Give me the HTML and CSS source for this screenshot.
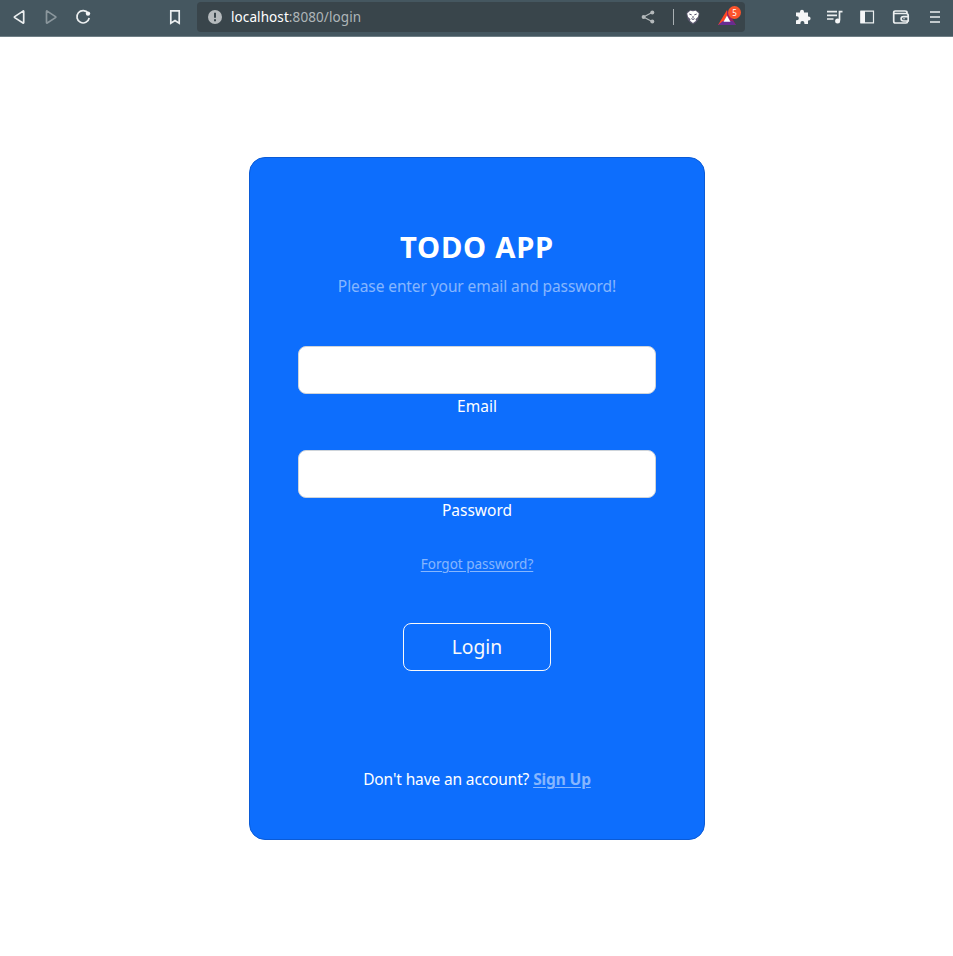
FILE: index.html
```html
<!DOCTYPE html>
<html lang="en">
<head>
<meta charset="utf-8">
<title>Todo App</title>
<link rel="stylesheet" href="styles.css">
</head>
<body>
<header class="toolbar">
  <div class="nav">
    <svg class="icon" viewBox="0 0 20 20"><path d="M14.700 4.500v11q0 .8-.7.4L5.700 10.600q-.7-.5 0-1L14 4.100q.7-.4.7.4Z"/></svg>
    <svg class="icon dim" viewBox="0 0 20 20"><path d="M5.500 4.500v11q0 .8.7.4l8.300-5.300q.7-.5 0-1L6.200 4.100Q5.500 3.700 5.500 4.500Z"/></svg>
    <svg class="icon" viewBox="0 0 20 20"><path d="M15.200 6.200A6.200 6.200 0 1 0 16.200 11"/><circle class="solid" cx="15" cy="6.600" r="2.200"/></svg>
  </div>
  <svg class="icon bookmark" viewBox="0 0 20 20"><path d="M5.800 3.800h8.400v12.400L10 13.600l-4.200 2.600Z"/></svg>
  <div class="address">
    <svg class="info" viewBox="0 0 14 14"><circle cx="7" cy="7" r="7"/><path d="M7 2.800v5M7 9.200v2"/></svg>
    <span class="url"><b class="host">localhost</b>:8080/login</span>
    <svg class="share" viewBox="0 0 14 14"><path d="M11.500 2.200 2.500 7l9 4.800"/><circle cx="11.300" cy="2.400" r="2"/><circle cx="2.600" cy="7" r="2"/><circle cx="11.300" cy="11.600" r="2"/></svg>
    <span class="divider"></span>
    <svg class="lion" viewBox="0 0 14 16"><path class="mane" d="M4 1h6l1.300 1.200 1.500.2.800 2.400-1.400 6-2.400 2.700L7 15.500l-2.800-2L1.800 10.800.4 4.800l.8-2.400 1.500-.2Z"/><path class="face" d="m4.200 1.800 2.800.5 2.800-.5 3 2.800-.9 3.400-2.400 2.300.5 1.500L7 14l-3-2.200.5-1.500L2.100 8l-.9-3.400Z"/><path class="features" d="m3.300 5 2.400.9M10.700 5l-2.400.9M7 7v2.200M5.300 9.600 7 10.500l1.700-.9"/></svg>
    <div class="rewards">
      <svg viewBox="0 0 18 16"><path fill="#ff4724" d="M9 0v6L4 15H0Z"/><path fill="#9e1f63" d="M9 0v6l5 9h4Z"/><path fill="#662d91" d="M0 15h18l-3.500-4H5Z"/><path fill="#fff" d="m9 5.500 3.500 6.200h-7Z"/></svg>
      <span class="count">5</span>
    </div>
  </div>
  <div class="tools">
    <svg class="icon" viewBox="0 0 20 20"><path class="solid" d="M3 5.500h4V4.700a2 2 0 0 1 4 0v.8h4v4h.6a2 2 0 0 1 0 4H15V17h-3.600v-1a2 2 0 0 0-4 0v1H3v-3.700h.8a2 2 0 0 0 0-4H3Z"/></svg>
    <svg class="icon" viewBox="0 0 20 20"><path d="M2 4.600h10M2 8.300h10M2 12h6.500M17.500 4.600h-3v9"/><circle class="solid" cx="12.600" cy="14" r="2.500"/></svg>
    <svg class="icon" viewBox="0 0 20 20"><path class="thin" d="M3.900 4.200h12.600v11.600H3.900Z"/><path class="solid" d="M3.500 4H8v12H3.500Z"/></svg>
    <svg class="icon wallet" viewBox="0 0 20 20"><path d="M16 7V5.500Q16 4 14 4H4.200Q2.700 4 2.700 5.500v8.700Q2.700 16 4.500 16H15q1.500 0 1.500-1.500V14M3 6.500h12q2.200 0 2.200 2V14H12.500q-2.400 0-2.400-2.200t2.400-2.200h4.700"/><circle class="solid" cx="13" cy="11.800" r=".7"/></svg>
    <svg class="icon menu" viewBox="0 0 20 20"><path d="M5 5h10M5 10h10M5 15h10"/></svg>
  </div>
</header>
<main class="page">
  <form class="card">
    <h2 class="title">TODO APP</h2>
    <p class="subtitle">Please enter your email and password!</p>
    <div class="field">
      <input class="input" type="email" id="email">
      <label for="email">Email</label>
    </div>
    <div class="field">
      <input class="input" type="password" id="password">
      <label for="password">Password</label>
    </div>
    <p class="forgot"><a href="#">Forgot password?</a></p>
    <button class="login" type="button">Login</button>
    <p class="signup">Don't have an account? <a href="#">Sign Up</a></p>
  </form>
</main>
</body>
</html>
```
FILE: styles.css
```css
* { box-sizing: border-box; }
body {
  margin: 0;
  min-height: 956px;
  background: #fff;
  font: 15.5px/24px "Noto Sans", sans-serif;
}
.toolbar {
  display: flex;
  align-items: flex-start;
  height: 37px;
  padding: 2px 8px 0 9px;
  background: #455760;
  border-bottom: 1px solid #6f7f86;
}
.icon {
  width: 20px;
  height: 20px;
  flex: none;
  fill: none;
  stroke: #eceff0;
  stroke-width: 1.7;
}
.solid { fill: #f5f6f7; stroke: none; }
.thin { stroke-width: 1.2; }
.dim { stroke: #8b979d; }
.nav { display: flex; gap: 12px; padding-top: 5px; }
.bookmark { margin: 5px 12px 0 72px; }
.address {
  display: flex;
  align-items: center;
  width: 548px;
  height: 30px;
  padding: 0 4px 0 11px;
  border-radius: 4px;
  background: #39454b;
}
.info { width: 14px; height: 14px; margin-right: 9px; fill: #b5babd; }
.info path { stroke: #39454b; stroke-width: 2; }
.url { color: #aeb5b8; font-size: 13.5px; letter-spacing: .09px; }
.host { color: #fff; font-weight: 400; }
.share { width: 14px; height: 14px; margin-left: auto; fill: #b4b9bb; stroke: #b4b9bb; stroke-width: 1.2; }
.share path { fill: none; }
.share circle { stroke: none; }
.divider { width: 1px; height: 16px; margin: 0 12px 0 18px; background: #a9b0b3; }
.lion { width: 14px; height: 16px; }
.mane { fill: #5d5a70; }
.face { fill: #fff; }
.features { fill: none; stroke: #54506a; stroke-width: 1; }
.rewards { position: relative; width: 23px; height: 22px; margin-left: 18px; }
.rewards svg { width: 18px; height: 16px; margin-top: 4px; display: block; }
.count {
  position: absolute;
  top: 0;
  right: 0;
  width: 13px;
  height: 13px;
  border-radius: 50%;
  background: #fb542b;
  color: #fff;
  font-size: 8px;
  line-height: 13px;
  text-align: center;
}
.tools { display: flex; gap: 12px; margin-left: auto; padding-top: 5px; }
.wallet, .menu { margin-left: 2px; }
.page { display: flex; justify-content: center; padding: 120px 0 0 1px; }
.card {
  display: flex;
  flex-direction: column;
  width: 456px;
  height: 683px;
  padding: 71px 48px 48px;
  border: 1px solid #0b5bd6;
  border-radius: 16px;
  background: #0d6efd;
  color: #fff;
  text-align: center;
}
.title { margin: 0 0 9px; font-size: 29.2px; line-height: 36px; font-weight: 700; letter-spacing: .75px; }
.subtitle { margin: 0 0 48px; color: rgba(255, 255, 255, .5); letter-spacing: -.09px; }
.field { display: flex; flex-direction: column; margin-bottom: 32px; }
.input {
  width: 100%;
  height: 48px;
  padding: 8px 16px;
  border: 1px solid #ced4da;
  border-radius: 8px;
  background: #fff;
  font: inherit;
}
.forgot { margin: 0 0 48px; font-size: 13.5px; line-height: 21px; }
a { color: rgba(255, 255, 255, .5); text-underline-offset: 2px; text-decoration-thickness: 1px; }
.login {
  align-self: center;
  width: 148px;
  height: 48px;
  padding: 0;
  border: 1px solid #f8f9fa;
  border-radius: 8px;
  background: transparent;
  color: #f8f9fa;
  font: 19.3px/30px "Noto Sans", sans-serif;
}
.signup { margin: auto 0 0; letter-spacing: -.13px; }
.signup a { font-weight: 700; }
```
